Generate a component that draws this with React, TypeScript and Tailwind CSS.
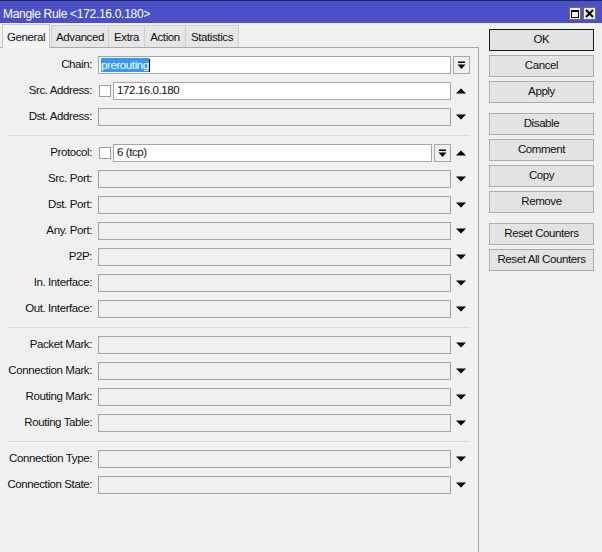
import React from "react";

const FONT = { fontFamily: '"Liberation Sans", Arial, sans-serif' };

const Down = () => (
  <svg width="10" height="6" viewBox="0 0 10 6">
    <path d="M0 0.5H10L5 5.5Z" fill="#000" />
  </svg>
);
const Up = () => (
  <svg width="10" height="6" viewBox="0 0 10 6">
    <path d="M0 5.5H10L5 0.5Z" fill="#000" />
  </svg>
);
const DropBtn = () => (
  <div className="ml-[2px] w-[17px] h-[18px] border border-[#a8a8a8] bg-[#f0f0f0] flex items-center justify-center">
    <svg width="9" height="9" viewBox="0 0 9 9">
      <rect x="1" y="0.5" width="7" height="1.5" fill="#000" />
      <path d="M0.5 3.5H8.5L4.5 8Z" fill="#000" />
    </svg>
  </div>
);
const Check = () => (
  <div className="ml-[1px] mr-[2px] w-[12px] h-[12px] border border-[#a0a0a0] bg-white shrink-0" />
);

function Field({ children, white }: { children?: React.ReactNode; white?: boolean }) {
  return (
    <div
      className={`flex-1 h-[18px] border border-[#a6a6a6] flex items-center pl-[2px] overflow-hidden whitespace-nowrap ${
        white ? "bg-white" : "bg-[#f0f0f0]"
      }`}
    >
      {children}
    </div>
  );
}

function Row({
  label,
  children,
  right,
}: {
  label: string;
  children: React.ReactNode;
  right?: React.ReactNode;
}) {
  return (
    <div className="flex items-center h-[18px] pr-[8px]">
      <div className="w-[92px] text-right whitespace-nowrap">{label}</div>
      <div className="ml-[6px] flex-1 flex items-center h-full">{children}</div>
      {right !== undefined && <div className="w-[19px] flex justify-center items-center">{right}</div>}
    </div>
  );
}

const Sep = () => <div className="h-[2px] ml-[8px] mr-[8px] border-b border-[#dadada]" />;

function Btn({ children, def }: { children: React.ReactNode; def?: boolean }) {
  return (
    <div
      className={`h-[22px] w-[105px] flex items-center justify-center bg-[#e3e3e3] border ${
        def ? "border-[#1a1a1a]" : "border-[#adadad]"
      }`}
    >
      {children}
    </div>
  );
}

const tabs = [
  { t: "Advanced", w: "w-[58px]" },
  { t: "Extra", w: "w-[37px]" },
  { t: "Action", w: "w-[42px]" },
  { t: "Statistics", w: "w-[54px]" },
];

export default function App() {
  return (
    <div
      className="w-[602px] h-[552px] bg-[#f0f0f0] text-[11.5px] tracking-[-0.4px] text-[#111] flex flex-col overflow-hidden"
      style={FONT}
    >
      <div className="h-[23px] shrink-0 bg-[#4b50c8] border-t border-[#23235a] flex items-center justify-between pl-[3px] pr-[6px]">
        <span className="text-white text-[12px] tracking-[-0.3px] pt-[4px]">Mangle Rule &lt;172.16.0.180&gt;</span>
        <div className="flex gap-[2px] mt-[3px]">
          <div className="w-[12px] h-[13px] bg-[#f0f0f0] border border-[#707070] flex items-center justify-center">
            <div className="w-[8px] h-[8px] border border-black border-t-2" />
          </div>
          <div className="w-[13px] h-[13px] bg-[#f0f0f0] border border-[#707070] flex items-center justify-center">
            <svg width="9" height="9" viewBox="0 0 9 9">
              <path d="M1 1L8 8M8 1L1 8" stroke="#000" strokeWidth="2" />
            </svg>
          </div>
        </div>
      </div>
      <div className="flex flex-1">
        <div className="w-[479px] flex flex-col">
          <div className="h-[24px] flex items-end pl-[2px]">
            <div className="w-[48px] h-[24px] -mb-px bg-[#f4f4f4] border border-b-0 border-[#c8c8c8] flex items-center justify-center pt-[2px] relative z-10">
              General
            </div>
            <div className="w-[2px]" />
            {tabs.map((x) => (
              <div
                key={x.t}
                className={`${x.w} h-[22px] bg-[#e6e6e6] border border-b-0 border-[#cfcfcf] -ml-px first:ml-0 flex items-center justify-center pt-[2px]`}
              >
                {x.t}
              </div>
            ))}
          </div>
          <div className="flex-1 border-t border-r border-[#a9a9a9] pt-[8px] flex flex-col gap-[8px]">
            <Row label="Chain:">
              <Field white>
                <span className="bg-[#3399ff] text-white leading-[14px] h-[14px]">prerouting</span>
                <span className="w-px h-[13px] bg-black" />
              </Field>
              <DropBtn />
            </Row>
            <Row label="Src. Address:" right={<Up />}>
              <Check />
              <Field white>
                <span className="pl-[1px]">172.16.0.180</span>
              </Field>
            </Row>
            <Row label="Dst. Address:" right={<Down />}>
              <Field />
            </Row>
            <Sep />
            <Row label="Protocol:" right={<Up />}>
              <Check />
              <Field white>
                <span className="pl-[1px]">6 (tcp)</span>
              </Field>
              <DropBtn />
            </Row>
            <Row label="Src. Port:" right={<Down />}>
              <Field />
            </Row>
            <Row label="Dst. Port:" right={<Down />}>
              <Field />
            </Row>
            <Row label="Any. Port:" right={<Down />}>
              <Field />
            </Row>
            <Row label="P2P:" right={<Down />}>
              <Field />
            </Row>
            <Row label="In. Interface:" right={<Down />}>
              <Field />
            </Row>
            <Row label="Out. Interface:" right={<Down />}>
              <Field />
            </Row>
            <Sep />
            <Row label="Packet Mark:" right={<Down />}>
              <Field />
            </Row>
            <Row label="Connection Mark:" right={<Down />}>
              <Field />
            </Row>
            <Row label="Routing Mark:" right={<Down />}>
              <Field />
            </Row>
            <Row label="Routing Table:" right={<Down />}>
              <Field />
            </Row>
            <Sep />
            <Row label="Connection Type:" right={<Down />}>
              <Field />
            </Row>
            <Row label="Connection State:" right={<Down />}>
              <Field />
            </Row>
          </div>
        </div>
        <div className="flex-1 pl-[10px] pt-[6px] flex flex-col">
          <div className="flex flex-col gap-[4px]">
            <Btn def>OK</Btn>
            <Btn>Cancel</Btn>
            <Btn>Apply</Btn>
          </div>
          <div className="flex flex-col gap-[4px] mt-[10px]">
            <Btn>Disable</Btn>
            <Btn>Comment</Btn>
            <Btn>Copy</Btn>
            <Btn>Remove</Btn>
          </div>
          <div className="flex flex-col gap-[4px] mt-[10px]">
            <Btn>Reset Counters</Btn>
            <Btn>Reset All Counters</Btn>
          </div>
        </div>
      </div>
    </div>
  );
}
